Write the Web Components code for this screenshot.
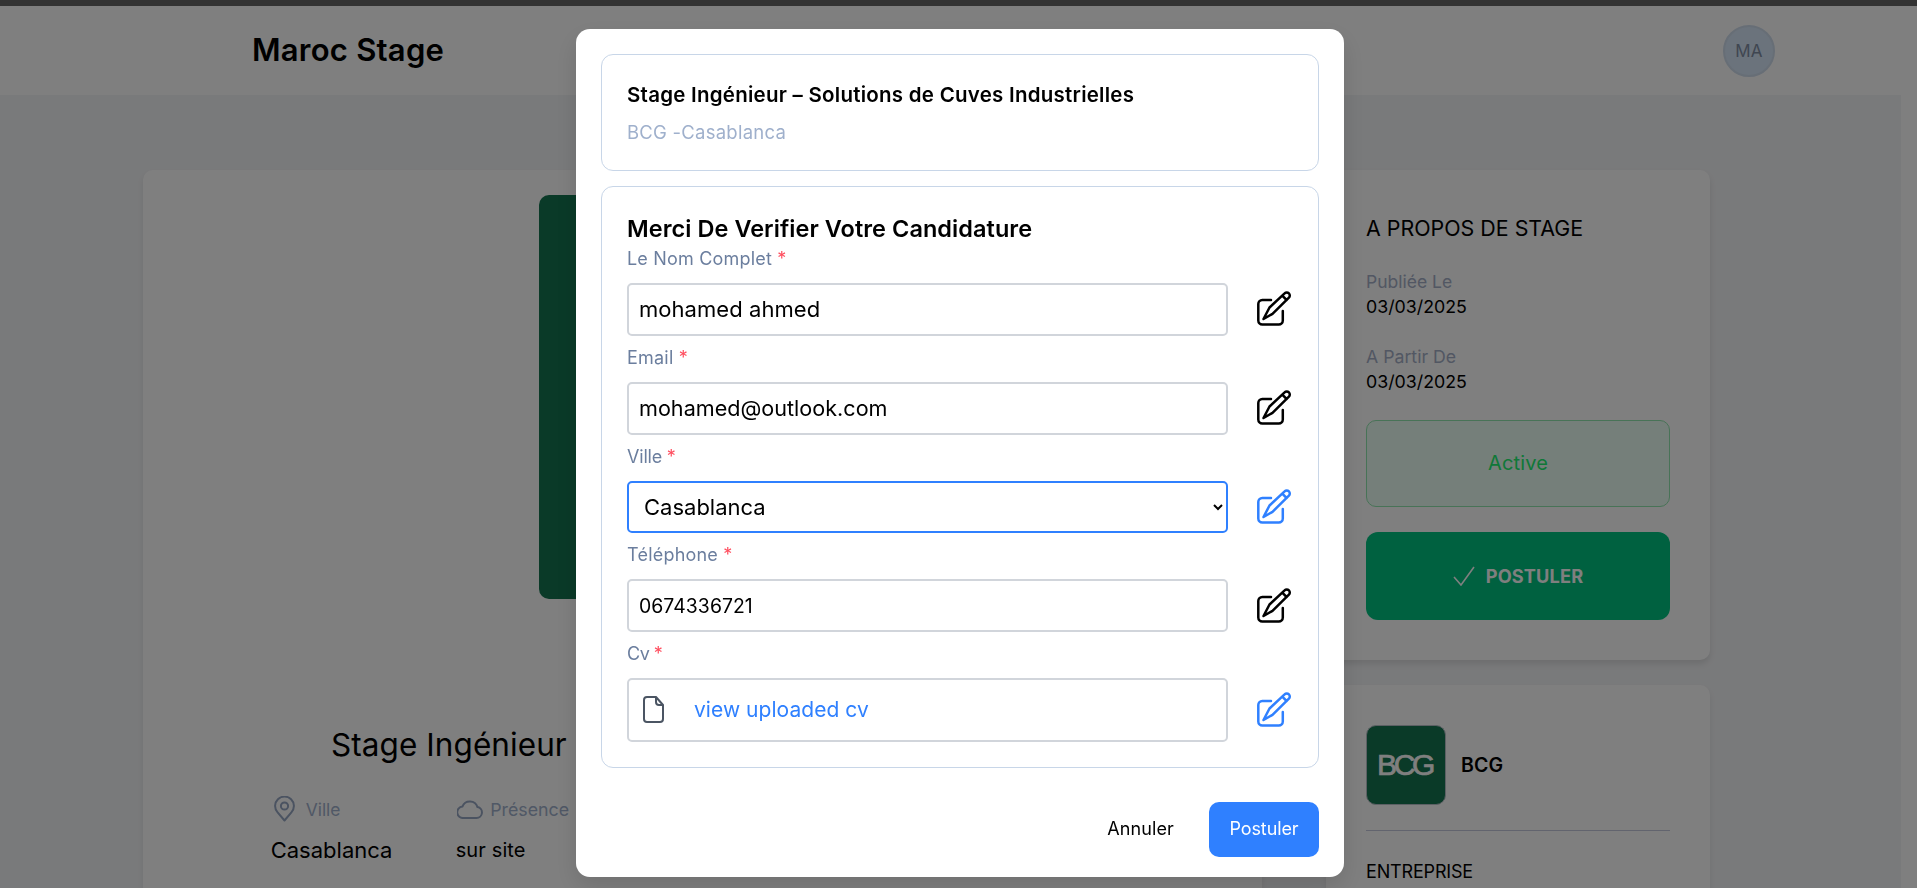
<!doctype html>
<html lang="fr"><head><meta charset="utf-8"><title>Maroc Stage</title>
<style>
html,body{margin:0;height:888px;overflow:hidden;background:#fff;font-family:Inter,"Liberation Sans",sans-serif;color:#000}
</style></head><body>
<x-topbar></x-topbar>
<x-navbar brand="Maroc Stage" initials="MA"></x-navbar>
<x-page>
  <x-job-card></x-job-card>
  <x-side-column>
    <x-about-card></x-about-card>
    <x-company-card></x-company-card>
  </x-side-column>
</x-page>
<x-apply-modal>
  <x-form-field label="Le Nom Complet" ls=".19"><x-text-box fs="22" ls=".05">mohamed ahmed</x-text-box></x-form-field>
  <x-form-field label="Email" ls=".21"><x-text-box fs="21.6" ls="0">mohamed@outlook.com</x-text-box></x-form-field>
  <x-form-field label="Ville" ls="-.2" active><x-select-box ls="0" value="Casablanca"></x-select-box></x-form-field>
  <x-form-field label="Téléphone" ls=".21"><x-text-box fs="19.4" ls=".05">0674336721</x-text-box></x-form-field>
  <x-form-field label="Cv" ls="-.5" active tall><x-file-box>view uploaded cv</x-file-box></x-form-field>
</x-apply-modal>
<script>
function comp(name, html, setup){
  customElements.define(name, class extends HTMLElement{
    connectedCallback(){
      if(this.shadowRoot) return;
      const r=this.attachShadow({mode:'open'});
      r.innerHTML = typeof html==='function' ? html(this) : html;
      if(setup) setup(this,r);
    }
  });
}
comp('x-topbar',`<style>:host{display:block;height:6px;background:#666}</style>`);
comp('x-navbar',h=>`<style>
:host{display:flex;align-items:center;justify-content:space-between;height:89px;box-sizing:border-box;padding:0 142px 0 252px;background:#fff}
.brand{font-size:31px;font-weight:600;letter-spacing:.23px;padding-bottom:2px}
.av{width:52px;height:52px;box-sizing:border-box;border-radius:50%;background:#d6e6f8;border:2px solid #cfdcec;display:flex;align-items:center;justify-content:center;font-size:17px;letter-spacing:.2px;color:#7f8ca2}
</style><div class="brand">${h.getAttribute('brand')}</div><div class="av">${h.getAttribute('initials')}</div>`);
comp('x-page',`<style>:host{display:flex;align-items:flex-start;gap:64px;height:793px;box-sizing:border-box;margin-right:16px;padding:75px 0 0 143px;background:#f3f4f6;overflow:hidden}</style><slot></slot>`);
comp('x-side-column',`<style>:host{display:flex;flex-direction:column;gap:25px;width:384px;flex:none}</style><slot></slot>`);
comp('x-job-card',`<style>
:host{display:block;flex:none;width:1119px;height:900px;box-sizing:border-box;padding:25px 0 0;background:#fff;border-radius:10px;box-shadow:0 4px 6px rgba(0,0,0,.08)}
.banner{width:327px;height:404px;margin-left:396px;background:#147450;border-radius:10px}
h1{margin:126px 0 0 188px;font-size:31.5px;line-height:40px;font-weight:400;letter-spacing:.07px;white-space:nowrap}
.meta{display:grid;grid-template-columns:185px 185px;margin:31px 0 0 127.7px}
.k{display:flex;align-items:center;height:26px;font-size:17.4px;color:#a0b0cc}
.k svg{flex:none;fill:none;stroke:#96a6c2;stroke-width:2}
.v{margin-top:13px;line-height:30px}
</style>
<div class="banner"></div>
<h1>Stage Ingénieur</h1>
<div class="meta">
  <div>
    <div class="k" style="padding-left:3px;gap:11px"><svg width="21" height="26" viewBox="0 0 21 26"><path d="M10.5 24.5 3.6 16.4A9.4 9.4 0 1 1 17.4 16.4Z" stroke-linejoin="round"/><circle cx="10.5" cy="10" r="3.6"/></svg>Ville</div>
    <div class="v" style="font-size:22px">Casablanca</div>
  </div>
  <div>
    <div class="k" style="padding-left:1px;gap:7.5px;font-size:17.8px"><svg width="26" height="20" viewBox="0 0 26 20"><path d="M6.5 19h13a5.5 5.5 0 0 0 1-10.9A8 8 0 0 0 5.4 7.6 5.7 5.7 0 0 0 6.5 19Z" stroke-linejoin="round"/></svg>Présence</div>
    <div class="v" style="font-size:20px;letter-spacing:.12px">sur site</div>
  </div>
</div>`);
comp('x-about-card',`<style>
:host{display:block;box-sizing:border-box;height:490px;padding:42.5px 40px 0;background:#fff;border-radius:10px;box-shadow:0 4px 6px rgba(0,0,0,.1)}
h2{margin:0 0 26px;font-size:21.4px;line-height:30px;font-weight:400}
.k,.d{line-height:25px}
.k{color:#a4aec6;font-size:17.5px}.d{font-size:17.8px;margin-bottom:25px}
.active{height:87px;box-sizing:border-box;margin-top:26.5px;padding-bottom:2px;border:1px solid #90e6ae;border-radius:10px;background:#ebfff4;color:#20f070;display:flex;align-items:center;justify-content:center;font-size:20px;letter-spacing:.15px}
.go{height:88px;margin-top:25px;border-radius:12px;background:#00c280;color:#fff;display:flex;align-items:center;justify-content:center;gap:11px;font-size:18.2px;font-weight:700;letter-spacing:.13px}
.go svg{fill:none;stroke:#fff;stroke-width:1.6}
</style>
<h2>A PROPOS DE STAGE</h2>
<div class="k">Publiée Le</div><div class="d">03/03/2025</div>
<div class="k" style="font-size:17.7px">A Partir De</div><div class="d" style="margin-bottom:0">03/03/2025</div>
<div class="active">Active</div>
<div class="go"><svg width="22" height="20" viewBox="0 0 22 20"><path d="M1 11l7 8L21 1"/></svg><span>POSTULER</span></div>`);
comp('x-company-card',`<style>
:host{display:block;box-sizing:border-box;height:400px;padding:40px 40px 0;background:#fff;border-radius:10px;box-shadow:0 4px 6px rgba(0,0,0,.08)}
.row{display:flex;align-items:center;gap:15px}
.logo{width:80px;height:80px;box-sizing:border-box;border:1px solid #b8c0c8;border-radius:10px;background:#147450;color:#fff;display:flex;align-items:center;justify-content:center;font-family:"Liberation Sans",sans-serif;font-size:30px;font-weight:400;letter-spacing:-3.4px;-webkit-text-stroke:.7px #fff;padding-right:3px}
.name{font-size:19.5px;font-weight:600;letter-spacing:.1px}
hr{border:0;border-top:1px solid #c4c8dc;margin:25px 0 27px}
.t{font-size:18px;line-height:28px;letter-spacing:-.17px}
</style>
<div class="row"><div class="logo">BCG</div><div class="name">BCG</div></div>
<hr><div class="t">ENTREPRISE</div>`);
comp('x-apply-modal',`<style>
:host{position:fixed;inset:0;box-sizing:border-box;padding:29px 0 0 576px;background:rgba(0,0,0,.5);z-index:10}
.m{width:768px;height:848px;box-sizing:border-box;padding:25px;background:#fff;border-radius:14px;box-shadow:0 10px 25px rgba(0,0,0,.12);display:flex;flex-direction:column}
.c{border:1px solid #c8d6e8;border-radius:12px;padding:26px 25px}
h3{margin:0 0 11px;font-size:20.5px;line-height:28px;font-weight:600;letter-spacing:.25px;white-space:nowrap}
.s{font-size:18.5px;line-height:24px;letter-spacing:.24px;color:#9fb0cc}
.f{margin-top:15px;padding-bottom:25px}
h4{margin:0 0 2px;font-size:23.5px;line-height:32px;font-weight:600;letter-spacing:.05px}
.fields{display:flex;flex-direction:column;gap:10px}
.foot{display:flex;justify-content:flex-end;align-items:center;gap:35px;margin-top:34px}
.no{font-size:18px;letter-spacing:.1px;padding-bottom:2px}
.ok{width:110px;height:55px;box-sizing:border-box;padding-bottom:2px;border-radius:10px;background:#2f80ff;color:#fff;display:flex;align-items:center;justify-content:center;font-size:18px;letter-spacing:-.1px}
</style>
<div class="m">
  <div class="c"><h3>Stage Ingénieur – Solutions de Cuves Industrielles</h3><div class="s">BCG -Casablanca</div></div>
  <div class="c f"><h4>Merci De Verifier Votre Candidature</h4><div class="fields"><slot></slot></div></div>
  <div class="foot"><div class="no">Annuler</div><div class="ok">Postuler</div></div>
</div>`);
comp('x-form-field',h=>`<style>
:host{display:block}
.l{height:24px;margin-bottom:12px;font-size:18px;line-height:24px;color:#6b7e9e;letter-spacing:${h.getAttribute('ls')}px}
.l i{font-style:normal;color:#ff4d5e;letter-spacing:0}
.r{display:flex;align-items:center;gap:24px;height:${h.hasAttribute('tall')?'63.5':'52.8'}px}
.b{width:601px;height:100%;flex:none}
svg{flex:none;width:48px;height:48px;margin-top:2px;fill:none;stroke:${h.hasAttribute('active')?'#2f80ff':'#000'};stroke-width:2.5;stroke-linecap:round;stroke-linejoin:round}
::slotted(*){height:100%}
</style>
<div class="l">${h.getAttribute('label')} <i>*</i></div>
<div class="r"><div class="b"><slot></slot></div>
<svg viewBox="0 0 48 48"><path d="M19 14H10.300a4 4 0 0 0-4 4V34.500a4 4 0 0 0 4 4H26.800a4 4 0 0 0 4-4V25"/><path d="M11.500 33 17.500 21.500 32.600 7.400a3.040 3.040 0 0 1 4.300 4.300L20.500 27.800ZM30.300 9.700l4.300 4.300"/></svg></div>`);
comp('x-text-box',h=>`<style>
:host{display:flex;align-items:center;box-sizing:border-box;height:100%;padding:0 10px;border:2px solid #d1d5db;border-radius:5px;background:#fff;color:#000;font-size:${h.getAttribute('fs')}px;letter-spacing:${h.getAttribute('ls')}px}
</style><slot></slot>`);
comp('x-select-box',h=>`<style>
:host{display:block;height:100%}
select{display:block;width:100%;height:100%;box-sizing:border-box;padding:0 0 0 11px;border:2px solid #2f80ff;border-radius:5px;background:#fff;color:#000;outline:none;font:400 22px Inter,"Liberation Sans",sans-serif;letter-spacing:${h.getAttribute('ls')}px}
</style><select><option>${h.getAttribute('value')}</option></select>`);
comp('x-file-box',`<style>
:host{display:flex;align-items:center;gap:30px;box-sizing:border-box;height:100%;padding:0 0 0 14px;border:2px solid #d1d5db;border-radius:5px;background:#fff;font-size:21px;letter-spacing:.05px;color:#2f80ff}
svg{flex:none;fill:none;stroke:#4b5563;stroke-width:2;stroke-linejoin:round}
</style><svg width="21" height="27" viewBox="0 0 21 27"><path d="M4 1h9l7 8v14a3 3 0 0 1-3 3H4a3 3 0 0 1-3-3V4a3 3 0 0 1 3-3ZM13 1v5a3 3 0 0 0 3 3h4"/></svg><slot></slot>`);
</script>
</body></html>
